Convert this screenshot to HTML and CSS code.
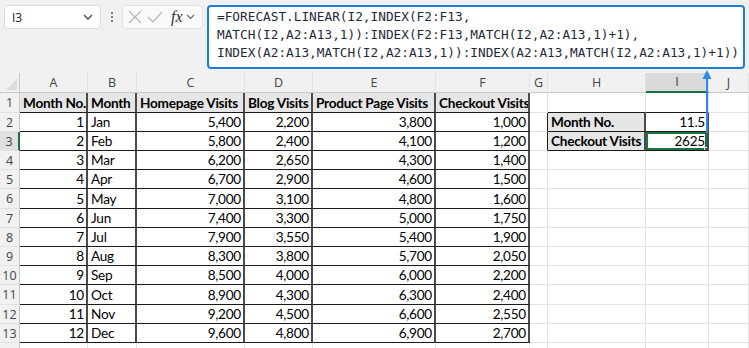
FILE: index.html
```html
<!DOCTYPE html>
<html lang="en">
<head>
    <meta charset="UTF-8">
    <title>FORECAST.LINEAR</title>
    <link rel="stylesheet" href="styles.css">
</head>
<body>
    <div class="formula-bar">
        <div class="name-box">
            <span>I3</span>
            <svg width="10" height="6" viewBox="0 0 10 6"><path d="M1 1 L5 5 L9 1" fill="none" stroke="#444" stroke-width="1.3"/></svg>
        </div>
        <div class="grip"><i></i><i></i><i></i></div>
        <div class="fx-box">
            <svg width="14" height="14" viewBox="0 0 14 14"><path d="M1 1 L13 13 M13 1 L1 13" stroke="#b5b5b5" stroke-width="1.2"/></svg>
            <svg width="16" height="14" viewBox="0 0 16 14"><path d="M1 7 L6 12 L15 2" fill="none" stroke="#b5b5b5" stroke-width="1.2"/></svg>
            <span class="fx">fx</span>
            <svg width="9" height="6" viewBox="0 0 9 6"><path d="M1 1 L4.5 4.5 L8 1" fill="none" stroke="#666" stroke-width="1.1"/></svg>
        </div>
        <div class="formula">
            <div>=FORECAST.LINEAR(I2,INDEX(F2:F13,</div>
            <div>MATCH(I2,A2:A13,1)):INDEX(F2:F13,MATCH(I2,A2:A13,1)+1),</div>
            <div>INDEX(A2:A13,MATCH(I2,A2:A13,1)):INDEX(A2:A13,MATCH(I2,A2:A13,1)+1))</div>
        </div>
    </div>

    <div class="sheet-wrap">
        <table class="sheet">
            <colgroup>
                <col class="w-rh"><col class="w-a"><col class="w-b"><col class="w-c"><col class="w-d"><col class="w-e"><col class="w-f"><col class="w-g"><col class="w-h"><col class="w-i"><col class="w-j">
            </colgroup>
            <tr class="col-head">
                <th class="corner"></th><th>A</th><th>B</th><th>C</th><th>D</th><th>E</th><th>F</th><th>G</th><th>H</th><th class="sel-col">I</th><th>J</th>
            </tr>
            <tr class="tall">
                <th class="rh">1</th>
                <td class="t hd">Month No.</td><td class="t hd">Month</td><td class="t hd">Homepage Visits</td><td class="t hd">Blog Visits</td><td class="t hd">Product Page Visits</td><td class="t hd">Checkout Visits</td>
                <td></td><td class="above"></td><td class="above"></td><td></td>
            </tr>
            <tr>
                <th class="rh">2</th>
                <td class="t n">1</td><td class="t">Jan</td><td class="t n">5,400</td><td class="t n">2,200</td><td class="t n">3,800</td><td class="t n">1,000</td>
                <td class="before"></td><td class="t hd">Month No.</td><td class="t n">11.5</td><td></td>
            </tr>
            <tr>
                <th class="rh sel-row">3</th>
                <td class="t n">2</td><td class="t">Feb</td><td class="t n">5,800</td><td class="t n">2,400</td><td class="t n">4,100</td><td class="t n">1,200</td>
                <td class="before"></td><td class="t hd">Checkout Visits</td><td class="t n active">2625</td><td></td>
            </tr>
            <tr>
                <th class="rh">4</th>
                <td class="t n">3</td><td class="t">Mar</td><td class="t n">6,200</td><td class="t n">2,650</td><td class="t n">4,300</td><td class="t n">1,400</td>
                <td></td><td></td><td></td><td></td>
            </tr>
            <tr>
                <th class="rh">5</th>
                <td class="t n">4</td><td class="t">Apr</td><td class="t n">6,700</td><td class="t n">2,900</td><td class="t n">4,600</td><td class="t n">1,500</td>
                <td></td><td></td><td></td><td></td>
            </tr>
            <tr class="tall">
                <th class="rh">6</th>
                <td class="t n">5</td><td class="t">May</td><td class="t n">7,000</td><td class="t n">3,100</td><td class="t n">4,800</td><td class="t n">1,600</td>
                <td></td><td></td><td></td><td></td>
            </tr>
            <tr>
                <th class="rh">7</th>
                <td class="t n">6</td><td class="t">Jun</td><td class="t n">7,400</td><td class="t n">3,300</td><td class="t n">5,000</td><td class="t n">1,750</td>
                <td></td><td></td><td></td><td></td>
            </tr>
            <tr>
                <th class="rh">8</th>
                <td class="t n">7</td><td class="t">Jul</td><td class="t n">7,900</td><td class="t n">3,550</td><td class="t n">5,400</td><td class="t n">1,900</td>
                <td></td><td></td><td></td><td></td>
            </tr>
            <tr>
                <th class="rh">9</th>
                <td class="t n">8</td><td class="t">Aug</td><td class="t n">8,300</td><td class="t n">3,800</td><td class="t n">5,700</td><td class="t n">2,050</td>
                <td></td><td></td><td></td><td></td>
            </tr>
            <tr>
                <th class="rh">10</th>
                <td class="t n">9</td><td class="t">Sep</td><td class="t n">8,500</td><td class="t n">4,000</td><td class="t n">6,000</td><td class="t n">2,200</td>
                <td></td><td></td><td></td><td></td>
            </tr>
            <tr class="tall">
                <th class="rh">11</th>
                <td class="t n">10</td><td class="t">Oct</td><td class="t n">8,900</td><td class="t n">4,300</td><td class="t n">6,300</td><td class="t n">2,400</td>
                <td></td><td></td><td></td><td></td>
            </tr>
            <tr>
                <th class="rh">12</th>
                <td class="t n">11</td><td class="t">Nov</td><td class="t n">9,200</td><td class="t n">4,500</td><td class="t n">6,600</td><td class="t n">2,550</td>
                <td></td><td></td><td></td><td></td>
            </tr>
            <tr>
                <th class="rh">13</th>
                <td class="t n">12</td><td class="t">Dec</td><td class="t n">9,600</td><td class="t n">4,800</td><td class="t n">6,900</td><td class="t n">2,700</td>
                <td></td><td></td><td></td><td></td>
            </tr>
            <tr>
                <th class="rh"></th>
                <td></td><td></td><td></td><td></td><td></td><td></td><td></td><td></td><td></td><td></td>
            </tr>
        </table>

        <!-- pointer from the formula to the result cell -->
        <svg class="pointer" width="12" height="66" viewBox="0 0 12 66">
            <path d="M6 1 L10.5 10 L1.5 10 Z" fill="#2b8be6"/>
            <path d="M6 9 L6 64" stroke="#2b8be6" stroke-width="2"/>
        </svg>
    </div>
</body>
</html>
```
FILE: styles.css
```css
body {
    margin: 0;
    width: 749px;
    height: 348px;
    overflow: hidden;
    background: #fff;
    font-family: 'Lato', 'Liberation Sans', sans-serif;
    color: #000;
    position: relative;
}

.formula-bar {
    height: 73px;
    box-sizing: border-box;
    padding: 5px 4px 0 4px;
    background: #f1f1f1;
    display: flex;
    align-items: flex-start;
}

.name-box {
    width: 97px;
    height: 24px;
    box-sizing: border-box;
    background: #fff;
    border: 1px solid #dcdcdc;
    border-radius: 4px;
    display: flex;
    align-items: center;
    justify-content: space-between;
    padding: 0 7px 0 7px;
    font-family: 'Open Sans', sans-serif;
    font-size: 12px;
    color: #222;
}

.grip {
    width: 21px;
    height: 24px;
    display: flex;
    flex-direction: column;
    align-items: center;
    justify-content: center;
    gap: 2px;
}

.grip i {
    width: 2px;
    height: 2px;
    background: #555;
    border-radius: 1px;
}

.fx-box {
    width: 81px;
    height: 24px;
    box-sizing: border-box;
    background: #fafafa;
    border: 1px solid #e1e1e1;
    border-radius: 4px;
    display: flex;
    align-items: center;
    padding: 0 4px 0 5px;
    gap: 5px;
}

.fx {
    font-family: 'Liberation Serif', serif;
    font-style: italic;
    font-size: 16px;
    color: #333;
    margin-left: 3px;
    margin-right: -2px;
}

.formula {
    margin-left: 4px;
    width: 538px;
    height: 64px;
    box-sizing: border-box;
    background: #fff;
    border: 2px solid #1a7fd9;
    border-radius: 4px;
    padding: 1px 0 0 8px;
    font-family: 'DejaVu Sans Mono', monospace;
    font-size: 12.75px;
    line-height: 18px;
    color: #1f2a3a;
    white-space: nowrap;
}

.sheet-wrap {
    background: #fff;
}

.sheet {
    border-collapse: separate;
    border-spacing: 0;
    table-layout: fixed;
    width: 749px;
}

.w-rh { width: 20px; }
.w-a { width: 68px; }
.w-b { width: 49px; }
.w-c { width: 108px; }
.w-d { width: 68px; }
.w-e { width: 123px; }
.w-f { width: 94px; }
.w-g { width: 18px; }
.w-h { width: 98px; }
.w-i { width: 63px; }
.w-j { width: 40px; }

.sheet tr {
    height: 19px;
}

.sheet tr.tall {
    height: 20px;
}

.sheet td {
    border-right: 1px solid #e2e2e2;
    border-bottom: 1px solid #e2e2e2;
    padding: 0 2px 0 3px;
    font-size: 13.6px;
    letter-spacing: -0.25px;
    line-height: 17px;
    vertical-align: bottom;
    white-space: nowrap;
    overflow: hidden;
    box-sizing: border-box;
}

.sheet tr.col-head {
    height: 20px;
}

.col-head th {
    background: #f1f1f1;
    border-bottom: 1px solid #c9c9c9;
    border-right: 1px solid #e2e2e2;
    font-family: 'Open Sans', sans-serif;
    font-weight: normal;
    font-size: 12.5px;
    color: #444;
    padding: 0;
    line-height: 18px;
}

.col-head th.corner {
    border-right: 1px solid #c9c9c9;
    position: relative;
}

.corner::after {
    content: '';
    position: absolute;
    right: 2px;
    bottom: 2px;
    border-left: 11px solid transparent;
    border-bottom: 11px solid #dcdcdc;
}

.col-head th.sel-col {
    background: #dadada;
    border-bottom: 2px solid #1e7145;
}

.rh {
    background: #f1f1f1;
    border-right: 1px solid #c9c9c9;
    border-bottom: 1px solid #e2e2e2;
    font-family: 'Open Sans', sans-serif;
    font-weight: normal;
    font-size: 12.5px;
    color: #444;
    padding: 0;
    line-height: 17px;
    vertical-align: middle;
}

.rh.sel-row {
    background: #e0e0e0;
    border-right: 2px solid #1e7145;
}

.sheet td.t {
    border-right: 2px solid #4a4a4a;
    border-bottom: 1px solid #1a1a1a;
}

.sheet td.hd {
    background: #e7e6e6;
    font-weight: bold;
}

.sheet td.n {
    text-align: right;
    padding-right: 2px;
}

.sheet td.above {
    border-bottom: 1px solid #1a1a1a;
}

.sheet td.before {
    border-right: 1px solid #1a1a1a;
}

.sheet td.active {
    position: relative;
    box-shadow: inset 0 0 0 2px #1e7145;
}

.active::after {
    content: '';
    position: absolute;
    right: -4px;
    bottom: -4px;
    width: 5px;
    height: 5px;
    background: #1e7145;
    border: 1px solid #fff;
}

.pointer {
    position: absolute;
    left: 701px;
    top: 69px;
}
```
